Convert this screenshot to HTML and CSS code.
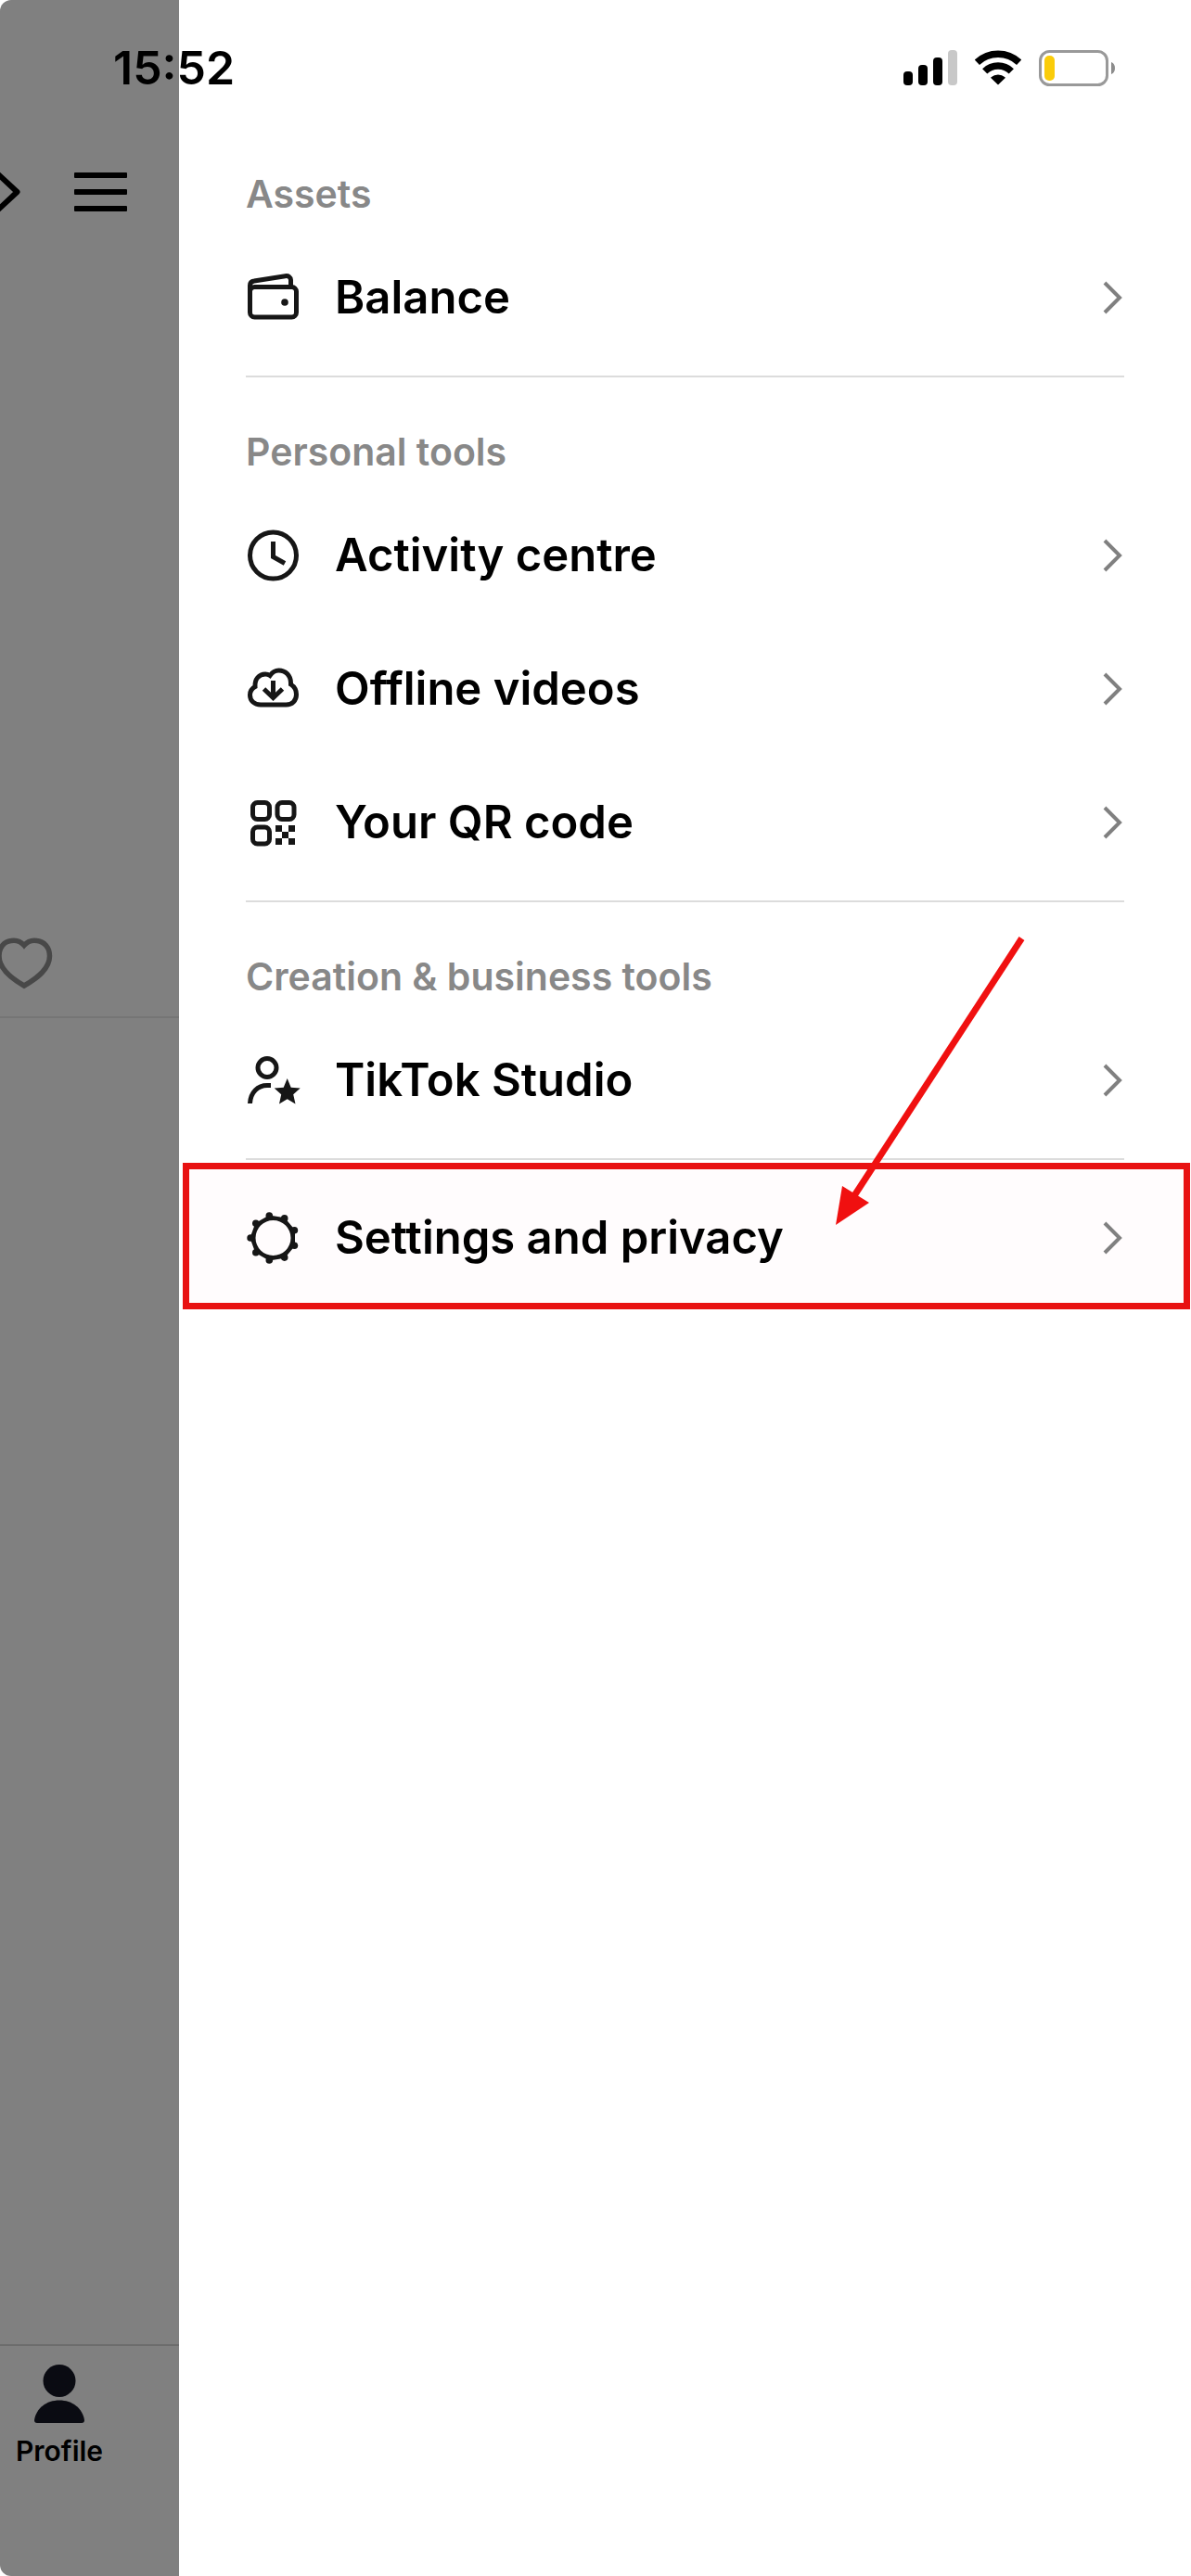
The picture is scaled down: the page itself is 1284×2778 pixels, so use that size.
FILE: index.html
```html
<!DOCTYPE html>
<html lang="en">
<head>
<meta charset="UTF-8">
<meta name="viewport" content="width=device-width, initial-scale=1.0">
<title>TikTok menu</title>
<link rel="stylesheet" href="styles.css">
</head>
<body>
<div class="screen">
    <!-- status bar -->
    <div class="status-bar">
        <span class="time">15:52</span>
        <div class="status-icons">
            <svg width="58" height="38" viewBox="0 0 58 38">
                <rect x="0" y="23" width="10" height="15" rx="4"/>
                <rect x="16" y="16" width="10" height="22" rx="4"/>
                <rect x="32" y="8" width="10" height="30" rx="4"/>
                <rect x="48" y="0" width="10" height="38" rx="4" fill="#c8c8c8"/>
            </svg>
            <svg width="50" height="38" viewBox="0 0 50 38">
                <path d="M2.4 13.2A33 33 0 0 1 47.6 13.2" fill="none" stroke="#000" stroke-width="7.5"/>
                <path d="M10.7 22.9A20.5 20.5 0 0 1 39.3 22.9" fill="none" stroke="#000" stroke-width="7.5"/>
                <path d="M25 36.5L18 29.8A11 11 0 0 1 32 29.8Z" stroke="#000" stroke-width="1.5" stroke-linejoin="round"/>
            </svg>
            <svg width="82" height="39" viewBox="0 0 82 39">
                <rect x="1.5" y="1.5" width="72" height="36" rx="10" fill="none" stroke="#999" stroke-width="3"/>
                <rect x="6" y="6" width="11" height="27" rx="5" fill="#facc0a"/>
                <path d="M78 13C81 14 82 17 82 19.5C82 22 81 25 78 26Z" fill="#8c8c8c"/>
            </svg>
        </div>
    </div>

    <!-- profile page, dimmed behind the drawer -->
    <div class="backdrop">
        <div class="top-bar">
            <svg width="22" height="46" viewBox="0 0 22 46">
                <path d="M-4 2L18.5 23L-4 44" fill="none" stroke="#000" stroke-width="6" stroke-linejoin="round"/>
            </svg>
            <button type="button" class="menu-button" aria-label="Menu">
                <svg width="57" height="42" viewBox="0 0 57 42">
                    <rect width="57" height="6" rx="1"/>
                    <rect y="18" width="57" height="6" rx="1"/>
                    <rect y="36" width="57" height="6" rx="1"/>
                </svg>
            </button>
        </div>
        <div class="profile-info"></div>
        <div class="tabs">
            <svg width="58" height="56" viewBox="0 0 58 56">
                <path d="M26 8.5C22 4 17 2.5 12 3.5C4 4.5-1 11-1 20C-1 34 12 44 26 52C40 44 53.5 34 53.5 20C53.5 11 48 4.5 40 3.5C35 2.5 30 4 26 8.5Z" fill="none" stroke="#484848" stroke-width="5.5"/>
            </svg>
        </div>
        <div class="bottom-nav">
            <a href="#profile" class="nav-item">
                <svg width="54" height="64" viewBox="0 0 54 64">
                    <circle cx="27" cy="17.5" r="17.5"/>
                    <path d="M3 63Q0 63 0 60C2 47 13 38.500 27 38.5S52 47 54 60Q54 63 51 63Z"/>
                </svg>
                <span>Profile</span>
            </a>
        </div>
    </div>

    <!-- drawer -->
    <nav class="drawer">
        <section class="group">
            <h2>Assets</h2>
            <a href="#balance" class="row">
                <svg class="icon" viewBox="0 0 60 60">
                    <rect x="4.5" y="18.5" width="50" height="32.5" rx="5"/>
                    <path d="M4.5 24V17Q4.5 12.5 9 12L42.5 6.7Q48 6 48.5 11V18"/>
                    <circle class="solid" cx="42" cy="35" r="3.8"/>
                </svg>
                <span class="label">Balance</span>
                <svg class="chevron" viewBox="0 0 24 40"><path d="M3 4L19 20L3 36"/></svg>
            </a>
        </section>

        <section class="group">
            <h2>Personal tools</h2>
            <a href="#activity" class="row">
                <svg class="icon" viewBox="0 0 60 60">
                    <circle cx="29.5" cy="30" r="25"/>
                    <path d="M29.5 15V31.5L42 38.5"/>
                </svg>
                <span class="label">Activity centre</span>
                <svg class="chevron" viewBox="0 0 24 40"><path d="M3 4L19 20L3 36"/></svg>
            </a>
            <a href="#offline" class="row">
                <svg class="icon" viewBox="0 0 60 60">
                    <path d="M16 47C9 47 4.5 42.5 4.5 36.5C4.5 32.5 6.5 29.5 10 27.5C9.5 19.5 14 14 21 14C23 14 24.5 14.5 26 15.5C28.5 12 31.5 10 35.5 10C43 10 48.5 15.5 48.5 23.5V25C52.5 27.5 54.5 31.5 54.5 36C54.5 42.5 50 47 43.5 47Z"/>
                    <path d="M29.5 21V38M19.5 30L29.5 39.5L39.5 30"/>
                </svg>
                <span class="label">Offline videos</span>
                <svg class="chevron" viewBox="0 0 24 40"><path d="M3 4L19 20L3 36"/></svg>
            </a>
            <a href="#qr" class="row">
                <svg class="icon" viewBox="0 0 60 60">
                    <rect x="7.5" y="8.5" width="18" height="18" rx="5"/>
                    <rect x="34" y="8.5" width="18" height="18" rx="5"/>
                    <rect x="7.5" y="35" width="18" height="18" rx="5"/>
                    <g class="solid">
                        <rect x="32" y="33" width="7" height="7"/>
                        <rect x="46" y="33" width="7" height="7"/>
                        <rect x="39" y="40" width="7" height="7"/>
                        <rect x="32" y="47" width="7" height="7"/>
                        <rect x="46" y="47" width="7" height="7"/>
                    </g>
                </svg>
                <span class="label">Your QR code</span>
                <svg class="chevron" viewBox="0 0 24 40"><path d="M3 4L19 20L3 36"/></svg>
            </a>
        </section>

        <section class="group">
            <h2>Creation &amp; business tools</h2>
            <a href="#studio" class="row">
                <svg class="icon" viewBox="0 0 60 60">
                    <circle cx="23" cy="16.5" r="10"/>
                    <path d="M4.5 55C5 43 13 35.5 23 35.5H27"/>
                    <path class="solid" d="M44.7 28L48.7 37.7L58.7 38.6L51.2 45.3L53.5 55.5L44.7 50.2L36 55.5L38.2 45.3L30.7 38.6L40.7 37.7Z"/>
                </svg>
                <span class="label">TikTok Studio</span>
                <svg class="chevron" viewBox="0 0 24 40"><path d="M3 4L19 20L3 36"/></svg>
            </a>
        </section>

        <section class="group highlighted">
            <a href="#settings" class="row">
                <svg class="icon" viewBox="0 0 60 60">
                    <g class="solid" transform="translate(29.5 30)">
                        <path fill-rule="evenodd" d="M-25 0L-19.2-16L-4.3-24.6L12.5-21.7L23.5-8.6V8.6L12.5 21.7L-4.3 24.6L-19.2 16ZM-19 0A19 19 0 1 0 19 0A19 19 0 1 0-19 0Z"/>
                        <circle cx="-24.4" cy="0" r="3.8"/>
                        <circle cx="-18.7" cy="-15.7" r="3.8"/>
                        <circle cx="-18.7" cy="15.7" r="3.8"/>
                        <circle cx="-4.2" cy="-24" r="3.8"/>
                        <circle cx="-4.2" cy="24" r="3.8"/>
                        <circle cx="12.2" cy="-21.1" r="3.8"/>
                        <circle cx="12.2" cy="21.1" r="3.8"/>
                        <circle cx="22.9" cy="-8.3" r="3.8"/>
                        <circle cx="22.9" cy="8.3" r="3.8"/>
                    </g>
                </svg>
                <span class="label">Settings and privacy</span>
                <svg class="chevron" viewBox="0 0 24 40"><path d="M3 4L19 20L3 36"/></svg>
            </a>
            <svg class="arrow" viewBox="0 0 230 320">
                <path d="M211.5 7L30 286" fill="none" stroke="#f01010" stroke-width="7"/>
                <path d="M11 316L18 274L47 292Z" fill="#f01010"/>
            </svg>
        </section>
    </nav>
</div>
</body>
</html>
```
FILE: styles.css
```css
* {
    box-sizing: border-box;
}

body {
    margin: 0;
    background-color: #ffffff;
    color: #000000;
    font-family: Inter, "Liberation Sans", sans-serif;
    font-weight: 600;
}

svg {
    display: block;
    flex: none;
}

a {
    color: inherit;
    text-decoration: none;
}

.screen {
    position: relative;
    display: flex;
    min-height: 100vh;
}

/* status bar lies over both panes */
.status-bar {
    position: absolute;
    top: 0;
    left: 0;
    right: 0;
    z-index: 2;
    display: flex;
    justify-content: space-between;
    align-items: center;
    height: 146px;
    padding: 0 82px 0 122px;
}

.time {
    font-size: 50px;
    line-height: 60px;
}

.status-icons {
    display: flex;
    align-items: center;
    gap: 19px;
}

/* dimmed page */
.backdrop {
    display: flex;
    flex-direction: column;
    flex: none;
    width: 193px;
    padding-top: 146px;
    background-color: #808080;
    border-radius: 12px 0 0 12px;
    overflow: hidden;
}

.top-bar {
    display: flex;
    align-items: center;
    gap: 58px;
    height: 122px;
}

.menu-button {
    padding: 0;
    border: none;
    background: none;
}

.profile-info {
    height: 714px;
}

.tabs {
    display: flex;
    align-items: center;
    height: 116px;
    border-bottom: 2px solid #757575;
}

.bottom-nav {
    height: 250px;
    margin-top: auto;
    padding-top: 20px;
    border-top: 2px solid #6c6c6c;
}

.nav-item {
    display: flex;
    flex-direction: column;
    align-items: center;
    gap: 11px;
    width: 128px;
    font-size: 30px;
    line-height: 36px;
}

.nav-item svg {
    fill: #0a0b12;
}

/* drawer */
.drawer {
    flex: 1;
    min-width: 0;
    padding-top: 129px;
    background-color: #ffffff;
}

.group {
    position: relative;
    padding: 50px 72px 12px;
}

.group::after {
    content: "";
    position: absolute;
    left: 72px;
    right: 72px;
    bottom: -2px;
    height: 2px;
    background-color: #dcdcdc;
}

.group + .group {
    margin-top: 2px;
}

.group h2 {
    margin: 0 0 10px;
    color: #888888;
    font-size: 41px;
    font-weight: 600;
    line-height: 60px;
}

.row {
    position: relative;
    z-index: 1;
    display: flex;
    align-items: center;
    gap: 36px;
    height: 144px;
}

.icon {
    width: 60px;
    height: 60px;
    fill: none;
    stroke: #161616;
    stroke-width: 5;
}

.icon .solid {
    fill: #161616;
    stroke: none;
}

.label {
    flex: 1;
    font-size: 49px;
    line-height: 60px;
}

.chevron {
    width: 24px;
    height: 40px;
    fill: none;
    stroke: #808080;
    stroke-width: 4;
}

.group.highlighted {
    padding-top: 12px;
    padding-bottom: 10px;
}

.group.highlighted::after {
    top: 3px;
    right: 1px;
    bottom: 5px;
    left: 4px;
    height: auto;
    border: 7px solid #e81212;
    background-color: #fffcfd;
}

.arrow {
    position: absolute;
    right: 164px;
    bottom: 92px;
    z-index: 2;
    width: 230px;
    height: 320px;
}
```
